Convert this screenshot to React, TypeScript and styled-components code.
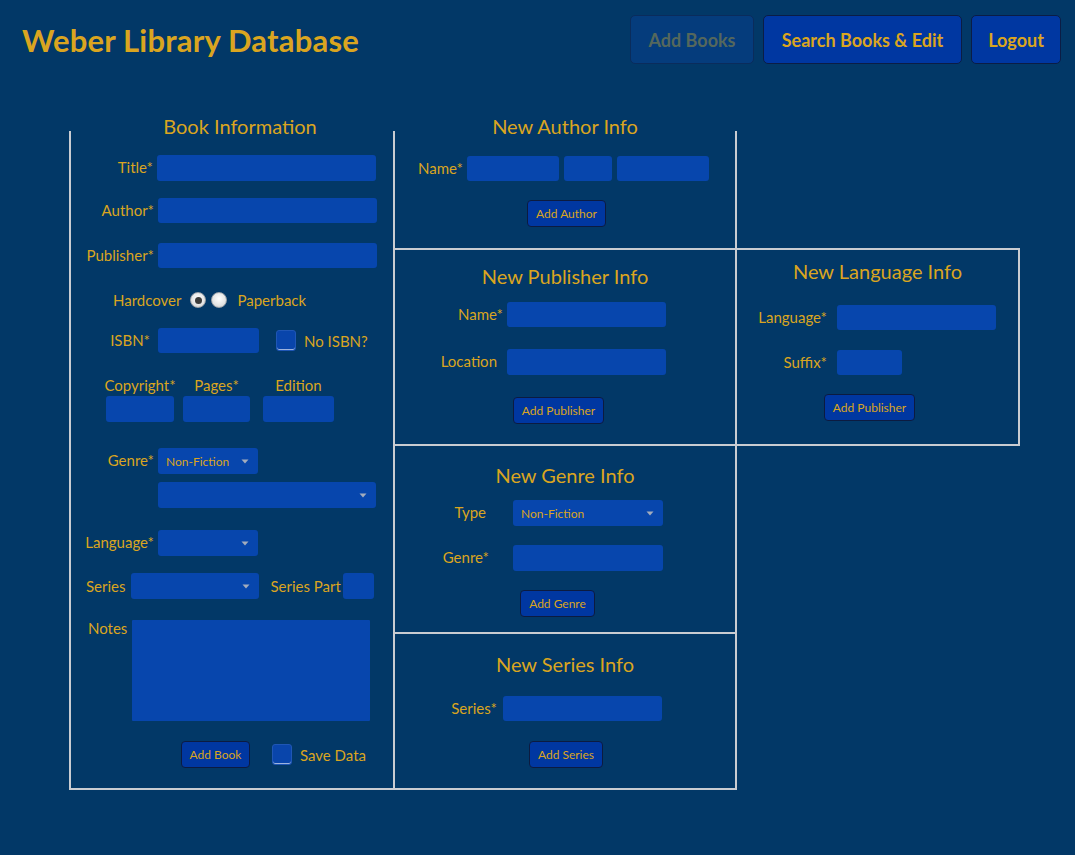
import React from "react";
import styled, { createGlobalStyle } from "styled-components";

const GOLD = "#daa520";
const BG = "#023867";
const FIELD = "#0746ad";
const BTN = "#0037a1";
const LINE = "#c9ccd2";

const Global = createGlobalStyle`
  html, body { margin: 0; padding: 0; background: ${BG}; }
  body { font-family: Lato, "Open Sans", sans-serif; color: ${GOLD}; min-height: 855px; }
  * { box-sizing: border-box; }
`;

const Page = styled.div`
  width: 1075px;
  min-height: 855px;
  background: ${BG};
`;

const Header = styled.header`
  display: flex;
  align-items: center;
  justify-content: space-between;
  padding: 15px 14px 0 22px;
`;

const Title = styled.h1`
  margin: 0;
  font-size: 31px;
  font-weight: 700;
  color: ${GOLD};
  letter-spacing: 0.2px;
`;

const Nav = styled.nav`
  display: flex;
  gap: 9px;
`;

const NavButton = styled.button<{ $disabled?: boolean; $w: number }>`
  width: ${(p) => p.$w}px;
  height: 49px;
  padding: 0 15px;
  border-radius: 5px;
  font-family: Lato, sans-serif;
  font-size: 18px;
  font-weight: 700;
  background: ${(p) => (p.$disabled ? "#053c7c" : BTN)};
  color: ${(p) => (p.$disabled ? "#55685c" : GOLD)};
  border: 1px solid ${(p) => (p.$disabled ? "#0a2c5c" : "#0b1d45")};
`;

const Board = styled.div`
  display: grid;
  grid-template-columns: 326px 342px 283px;
  grid-template-rows: 119px 196px 188px 156px;
  margin: 67px 0 0 69px;
`;

const BookPanel = styled.section`
  grid-column: 1;
  grid-row: 1 / span 4;
  border-left: 2px solid ${LINE};
  border-right: 2px solid ${LINE};
  border-bottom: 2px solid ${LINE};
  display: flex;
  flex-direction: column;
`;

const Section = styled.section<{ $col?: number; $row: number }>`
  grid-column: ${(p) => p.$col ?? 2};
  grid-row: ${(p) => p.$row};
  border-right: 2px solid ${LINE};
  border-bottom: 2px solid ${LINE};
  display: flex;
  flex-direction: column;
`;

const LangPanel = styled(Section)`
  border-top: 2px solid ${LINE};
  margin-top: -2px;
`;

const Heading = styled.h2<{ $mt: number; $dx?: number }>`
  margin: ${(p) => p.$mt}px 0 0 ${(p) => p.$dx ?? 0}px;
  height: 26px;
  line-height: 26px;
  font-size: 20px;
  font-weight: 400;
  text-align: center;
  color: ${GOLD};
`;

const Row = styled.div<{ $mt: number; $pl?: number; $gap?: number }>`
  display: flex;
  align-items: center;
  margin-top: ${(p) => p.$mt}px;
  padding-left: ${(p) => p.$pl ?? 0}px;
  gap: ${(p) => p.$gap ?? 4}px;
`;

const Label = styled.label<{ $w?: number; $pr?: number; $top?: boolean }>`
  flex-shrink: 0;
  width: ${(p) => (p.$w ? `${p.$w}px` : "auto")};
  padding-right: ${(p) => p.$pr ?? 0}px;
  text-align: right;
  font-size: 15px;
  line-height: 20px;
  white-space: nowrap;
  align-self: ${(p) => (p.$top ? "flex-start" : "center")};
  margin-top: -2px;
  color: ${GOLD};
`;

const Field = styled.div<{ $w: number; $h?: number }>`
  width: ${(p) => p.$w}px;
  height: ${(p) => p.$h ?? 26}px;
  flex-shrink: 0;
  background: ${FIELD};
  border-radius: 3px;
`;

const NotesArea = styled(Field)`
  border-radius: 1px;
`;

const SelectBox = styled.div<{ $w: number }>`
  width: ${(p) => p.$w}px;
  height: 26px;
  flex-shrink: 0;
  display: flex;
  align-items: center;
  justify-content: space-between;
  padding: 0 9px 0 8px;
  background: ${FIELD};
  border-radius: 3px;
  font-size: 12px;
  color: ${GOLD};
`;

const Chevron = () => (
  <svg width="8" height="5" viewBox="0 0 8 5" style={{ marginLeft: "auto" }}>
    <path d="M0.5 0.5 L7.5 0.5 L4 4.5 Z" fill="#a3acbd" />
  </svg>
);

const Check = styled.span<{ $ml: number }>`
  width: 20px;
  height: 21px;
  flex-shrink: 0;
  margin-left: ${(p) => p.$ml}px;
  border-radius: 3px;
  background: #0945ab;
  border: 1px solid #1f56b5;
  box-shadow: inset 0 -1px 0 #9db3dd;
`;

const Radio = styled.span<{ $on?: boolean; $ml?: number }>`
  width: 16px;
  height: 16px;
  border-radius: 50%;
  flex-shrink: 0;
  margin-left: ${(p) => p.$ml ?? 0}px;
  border: 1px solid #9ea3aa;
  background: radial-gradient(circle at 50% 40%, #ffffff 0%, #e4e4e4 60%, #c9c9c9 100%);
  display: flex;
  align-items: center;
  justify-content: center;
  &::after {
    content: "";
    width: 7px;
    height: 7px;
    border-radius: 50%;
    background: ${(p) => (p.$on ? "#3c3c3c" : "transparent")};
  }
`;

const Text = styled.span<{ $ml?: number }>`
  font-size: 15px;
  line-height: 20px;
  margin-left: ${(p) => p.$ml ?? 0}px;
  white-space: nowrap;
  color: ${GOLD};
`;

const SmallButton = styled.button<{ $w: number; $ml?: number; $mt: number }>`
  width: ${(p) => p.$w}px;
  height: 27px;
  margin-top: ${(p) => p.$mt}px;
  margin-left: ${(p) => p.$ml ?? 0}px;
  align-self: ${(p) => (p.$ml !== undefined ? "flex-start" : "center")};
  flex-shrink: 0;
  padding: 0;
  background: ${BTN};
  border: 1px solid #0c1b40;
  border-radius: 4px;
  font-family: Lato, sans-serif;
  font-size: 12px;
  color: ${GOLD};
`;

const Stack = styled.div<{ $w: number; $ml?: number }>`
  display: flex;
  flex-direction: column;
  align-items: center;
  width: ${(p) => p.$w}px;
  margin-left: ${(p) => p.$ml ?? 0}px;
  gap: 1px;
`;

export default function App() {
  return (
    <Page>
      <Global />
      <Header>
        <Title>Weber Library Database</Title>
        <Nav>
          <NavButton $disabled $w={124}>Add Books</NavButton>
          <NavButton $w={199}>Search Books &amp; Edit</NavButton>
          <NavButton $w={90}>Logout</NavButton>
        </Nav>
      </Header>

      <Board>
        <BookPanel>
          <Heading $mt={-18} $dx={16}>Book Information</Heading>
          <Row $mt={16}>
            <Label $w={82}>Title*</Label>
            <Field $w={219} />
          </Row>
          <Row $mt={17}>
            <Label $w={83}>Author*</Label>
            <Field $w={219} $h={25} />
          </Row>
          <Row $mt={20}>
            <Label $w={83}>Publisher*</Label>
            <Field $w={219} $h={25} />
          </Row>
          <Row $mt={22} $pl={42} $gap={5}>
            <Text>Hardcover</Text>
            <Radio $on $ml={4} />
            <Radio />
            <Text $ml={5}>Paperback</Text>
          </Row>
          <Row $mt={18}>
            <Label $w={79}>ISBN*</Label>
            <Field $w={101} $h={25} style={{ marginLeft: 4 }} />
            <Check $ml={13} />
            <Text $ml={4}>No ISBN?</Text>
          </Row>
          <Row $mt={22} $pl={35} $gap={0}>
            <Stack $w={68}>
              <Text>Copyright*</Text>
              <Field $w={68} />
            </Stack>
            <Stack $w={67} $ml={9}>
              <Text>Pages*</Text>
              <Field $w={67} />
            </Stack>
            <Stack $w={71} $ml={13}>
              <Text>Edition</Text>
              <Field $w={71} />
            </Stack>
          </Row>
          <Row $mt={26}>
            <Label $w={83}>Genre*</Label>
            <SelectBox $w={100}>
              Non-Fiction
              <Chevron />
            </SelectBox>
          </Row>
          <Row $mt={8} $pl={87}>
            <SelectBox $w={218}>
              <Chevron />
            </SelectBox>
          </Row>
          <Row $mt={22}>
            <Label $w={83}>Language*</Label>
            <SelectBox $w={100}>
              <Chevron />
            </SelectBox>
          </Row>
          <Row $mt={17} $pl={15} $gap={5}>
            <Text>Series</Text>
            <SelectBox $w={128}>
              <Chevron />
            </SelectBox>
            <Text $ml={7}>Series Part</Text>
            <Field $w={31} style={{ marginLeft: -3 }} />
          </Row>
          <Row $mt={21} $pl={17} $gap={5}>
            <Label $top>Notes</Label>
            <NotesArea $w={238} $h={101} />
          </Row>
          <Row $mt={20} $pl={110} $gap={0}>
            <SmallButton $w={69} $mt={0}>Add Book</SmallButton>
            <Check $ml={22} />
            <Text $ml={8}>Save Data</Text>
          </Row>
        </BookPanel>

        <Section $row={1}>
          <Heading $mt={-18}>New Author Info</Heading>
          <Row $mt={17} $pl={23} $gap={5}>
            <Label style={{ marginRight: -1 }}>Name*</Label>
            <Field $w={92} $h={25} />
            <Field $w={48} $h={25} />
            <Field $w={92} $h={25} />
          </Row>
          <SmallButton $w={79} $mt={19} $ml={132}>Add Author</SmallButton>
        </Section>

        <Section $row={2}>
          <Heading $mt={13}>New Publisher Info</Heading>
          <Row $mt={13}>
            <Label $w={108}>Name*</Label>
            <Field $w={159} $h={25} />
          </Row>
          <Row $mt={22}>
            <Label $w={108} $pr={6}>Location</Label>
            <Field $w={159} />
          </Row>
          <SmallButton $w={91} $mt={22} $ml={118}>Add Publisher</SmallButton>
        </Section>

        <LangPanel $col={3} $row={2}>
          <Heading $mt={8}>New Language Info</Heading>
          <Row $mt={21} $gap={10}>
            <Label $w={90}>Language*</Label>
            <Field $w={159} $h={25} />
          </Row>
          <Row $mt={20} $gap={10}>
            <Label $w={90}>Suffix*</Label>
            <Field $w={65} $h={25} />
          </Row>
          <SmallButton $w={91} $mt={19} $ml={87}>Add Publisher</SmallButton>
        </LangPanel>

        <Section $row={3}>
          <Heading $mt={16}>New Genre Info</Heading>
          <Row $mt={12} $gap={24}>
            <Label $w={94} $pr={3}>Type</Label>
            <SelectBox $w={150}>
              Non-Fiction
              <Chevron />
            </SelectBox>
          </Row>
          <Row $mt={19} $gap={24}>
            <Label $w={94}>Genre*</Label>
            <Field $w={150} />
          </Row>
          <SmallButton $w={75} $mt={19} $ml={125}>Add Genre</SmallButton>
        </Section>

        <Section $row={4}>
          <Heading $mt={17}>New Series Info</Heading>
          <Row $mt={19} $gap={6}>
            <Label $w={102}>Series*</Label>
            <Field $w={159} $h={25} />
          </Row>
          <SmallButton $w={74} $mt={20} $ml={134}>Add Series</SmallButton>
        </Section>
      </Board>
    </Page>
  );
}
